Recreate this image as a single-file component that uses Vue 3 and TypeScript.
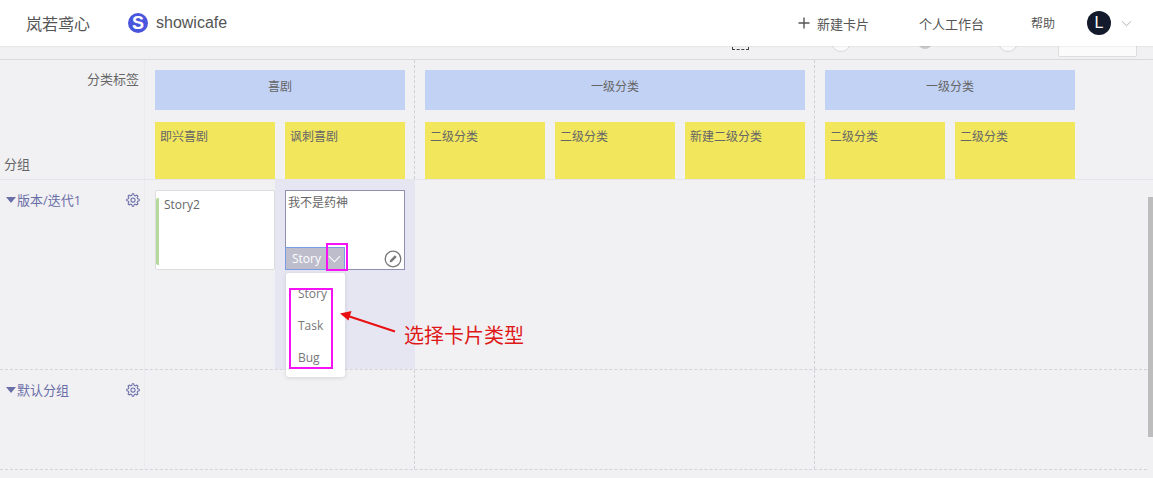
<template>
  <div class="page">
    <header class="topbar">
      <span class="brand">岚若鸢心</span>
      <span class="team-logo">S</span>
      <span class="team-name">showicafe</span>
      <nav class="nav">
        <span class="nav-new">
          <svg class="plus" viewBox="0 0 12 12" width="12" height="12">
            <path d="M6 0.5V11.5M0.5 6H11.5" />
          </svg>
          新建卡片
        </span>
        <span class="nav-work">个人工作台</span>
        <span class="nav-help">帮助</span>
        <span class="avatar">L</span>
        <svg class="nav-caret" viewBox="0 0 12 7" width="11" height="7">
          <path d="M1 1L6 6L11 1" />
        </svg>
      </nav>
    </header>

    <div class="toolbar">
      <span class="tool-dash"></span>
      <span class="tool-circle"></span>
      <span class="tool-dot"></span>
      <span class="tool-circle tool-circle-last"></span>
      <span class="tool-box"></span>
    </div>

    <div class="board">
      <div class="head-row">
        <div class="corner">
          <span class="corner-top">分类标签</span>
          <span class="corner-bottom">分组</span>
        </div>
        <section
          v-for="cat in categories"
          :key="cat.id"
          class="cat"
          :class="{ 'cat-first': cat.id === 'a', 'cat-second': cat.id === 'b', 'cat-third': cat.id === 'c' }"
        >
          <div class="cat-band">{{ cat.title }}</div>
          <div class="sub-list">
            <div v-for="sub in cat.subs" :key="sub.id" class="sub">{{ sub.title }}</div>
          </div>
        </section>
      </div>

      <div class="group-row group-tall">
        <div class="group-name">
          <span class="tri"></span>
          <span class="group-title">版本/迭代1</span>
          <svg class="gear" viewBox="0 0 24 24" width="14" height="14">
            <path :d="gearPath" />
            <circle cx="12" cy="12" r="3.6" />
          </svg>
        </div>
        <div class="lane cat-first lane-split">
          <div class="slot slot-left">
            <div class="card card-plain">
              <span class="card-bar"></span>
              <span class="card-title">Story2</span>
            </div>
          </div>
          <div class="slot slot-active">
            <div class="card card-edit">
              <span class="card-text">我不是药神</span>
              <div class="card-foot">
                <div class="type-select">
                  <span>Story</span>
                  <svg class="type-caret" viewBox="0 0 14 8" width="13" height="8">
                    <path d="M1 1L7 7L13 1" />
                  </svg>
                </div>
                <svg class="edit" viewBox="0 0 18 18" width="18" height="18">
                  <circle cx="9" cy="9" r="7.8" />
                  <path class="edit-pen" d="M5.6 12.4L6.3 9.9L10.9 5.3L12.7 7.1L8.1 11.7Z" />
                </svg>
              </div>
            </div>
          </div>
        </div>
        <div class="lane cat-second"></div>
        <div class="lane cat-third"></div>
      </div>

      <div class="group-row group-short">
        <div class="group-name">
          <span class="tri"></span>
          <span class="group-title">默认分组</span>
          <svg class="gear" viewBox="0 0 24 24" width="14" height="14">
            <path :d="gearPath" />
            <circle cx="12" cy="12" r="3.6" />
          </svg>
        </div>
        <div class="lane cat-first"></div>
        <div class="lane cat-second"></div>
        <div class="lane cat-third"></div>
      </div>
    </div>

    <ul class="type-menu">
      <li v-for="item in cardTypes" :key="item">{{ item }}</li>
    </ul>

    <span class="mark mark-caret"></span>
    <span class="mark mark-list"></span>
    <svg class="note-arrow" viewBox="0 0 60 24" width="60" height="24">
      <path class="note-line" d="M55 19.5L8 4" />
      <path class="note-head" d="M0 1.5L11.5 -1L8.5 8.5Z" />
    </svg>
    <span class="note">选择卡片类型</span>
    <span class="scroll-thumb"></span>
  </div>
</template>

<script setup lang="ts">
interface Sub {
  id: number;
  title: string;
}

interface Category {
  id: string;
  title: string;
  subs: Sub[];
}

const categories: Category[] = [
  {
    id: 'a',
    title: '喜剧',
    subs: [
      { id: 1, title: '即兴喜剧' },
      { id: 2, title: '讽刺喜剧' }
    ]
  },
  {
    id: 'b',
    title: '一级分类',
    subs: [
      { id: 3, title: '二级分类' },
      { id: 4, title: '二级分类' },
      { id: 5, title: '新建二级分类' }
    ]
  },
  {
    id: 'c',
    title: '一级分类',
    subs: [
      { id: 6, title: '二级分类' },
      { id: 7, title: '二级分类' }
    ]
  }
];

const cardTypes = ['Story', 'Task', 'Bug'];

// outline of the settings cog, eight teeth
const gearPath = (() => {
  const teeth = 8;
  const points: string[] = [];
  for (let i = 0; i < teeth; i++) {
    const a = (i / teeth) * Math.PI * 2 - Math.PI / 2;
    const step = Math.PI / teeth;
    const list: [number, number][] = [
      [8.2, a - step * 0.62],
      [10.8, a - step * 0.32],
      [10.8, a + step * 0.32],
      [8.2, a + step * 0.62]
    ];
    for (const [r, t] of list) {
      points.push(`${(12 + r * Math.cos(t)).toFixed(2)} ${(12 + r * Math.sin(t)).toFixed(2)}`);
    }
  }
  return `M${points.join('L')}Z`;
})();
</script>

<style scoped>
.page {
  position: relative;
  width: 1153px;
  height: 478px;
  overflow: hidden;
  background: #f1f1f4;
  color: #666;
  font-family: "Open Sans", "Noto Sans CJK SC", sans-serif;
  font-size: 12px;
}

.topbar {
  position: relative;
  z-index: 2;
  display: flex;
  align-items: center;
  height: 46px;
  box-sizing: border-box;
  padding-left: 26px;
  background: #fff;
  box-shadow: 0 1px 1px rgba(0, 0, 0, 0.04);
  color: #555;
}

.brand {
  font-size: 16px;
  margin-right: 38px;
}

.team-logo {
  display: flex;
  align-items: center;
  justify-content: center;
  width: 20px;
  height: 20px;
  border-radius: 50%;
  background: #4a55dd;
  color: #fff;
  font-family: "Liberation Sans", sans-serif;
  font-weight: 700;
  font-size: 18px;
  margin-right: 8px;
}

.team-name {
  font-family: "Liberation Sans", sans-serif;
  font-size: 16px;
}

.nav {
  display: flex;
  align-items: center;
  margin-left: auto;
  padding-right: 21px;
  font-size: 13px;
}

.nav-new {
  display: flex;
  align-items: center;
  gap: 7px;
}

.plus path {
  fill: none;
  stroke: #555;
  stroke-width: 1.4;
}

.nav-work {
  margin-left: 50px;
}

.nav-help {
  margin-left: 47px;
  font-size: 12px;
}

.avatar {
  display: flex;
  align-items: center;
  justify-content: center;
  width: 24px;
  height: 24px;
  margin-left: 32px;
  border-radius: 50%;
  background: #121a2c;
  color: #fff;
  font-family: "Liberation Sans", sans-serif;
  font-size: 16px;
}

.nav-caret {
  margin-left: 10px;
}

.nav-caret path {
  fill: none;
  stroke: #aaa;
}

.toolbar {
  display: flex;
  align-items: flex-start;
  height: 14px;
  box-sizing: border-box;
  border-bottom: 1px solid #d9d9dc;
  overflow: hidden;
  padding-left: 732px;
}

.tool-dash {
  width: 15px;
  height: 2px;
  margin-top: 1px;
  border: 1px dashed #444;
  border-top: none;
  flex: none;
}

.tool-circle {
  flex: none;
  width: 20px;
  height: 20px;
  margin-top: -14px;
  margin-left: 82px;
  border-radius: 50%;
  background: #fafafa;
  border: 1px solid #d8d8d8;
  box-sizing: border-box;
}

.tool-dot {
  flex: none;
  width: 14px;
  height: 14px;
  margin-top: -11px;
  margin-left: 67px;
  border-radius: 50%;
  background: #c8c8c8;
}

.tool-circle-last {
  margin-left: 66px;
}

.tool-box {
  flex: none;
  width: 79px;
  height: 11px;
  margin-left: 40px;
  box-sizing: border-box;
  background: #fbfbfb;
  border: 1px solid #ddd;
  border-top: none;
  border-radius: 0 0 2px 2px;
}

.head-row,
.group-row {
  display: grid;
  grid-template-columns: 145px 270px 400px 1fr;
}

.head-row {
  height: 120px;
  box-sizing: border-box;
  border-bottom: 1px solid #e6e6ea;
}

.corner {
  display: flex;
  flex-direction: column;
  justify-content: space-between;
  height: 119px;
  box-sizing: border-box;
  padding: 10px 5px 6px 4px;
  font-size: 13px;
  line-height: 18px;
  border-right: 1px dotted #e6e6ea;
}

.corner-top {
  text-align: right;
}

.cat {
  box-sizing: border-box;
  padding: 10px 0 0 10px;
}

.cat-first,
.cat-second {
  border-right: 1px dashed #cfcfd4;
}

.cat-band {
  height: 40px;
  line-height: 34px;
  text-align: center;
  background: #c2d2f4;
}

.cat-first .cat-band {
  width: 250px;
}

.cat-second .cat-band {
  width: 380px;
}

.cat-third .cat-band {
  width: 250px;
}

.sub-list {
  display: flex;
  gap: 10px;
  margin-top: 12px;
}

.sub {
  width: 120px;
  height: 57px;
  box-sizing: border-box;
  padding: 6px 5px;
  line-height: 18px;
  background: #f2e65c;
}

.group-row {
  box-sizing: border-box;
  border-bottom: 1px dashed #d4d4d8;
  width: 1147px;
}

.group-tall {
  height: 190px;
}

.group-short {
  height: 100px;
}

.group-name {
  display: flex;
  align-items: flex-start;
  box-sizing: border-box;
  padding: 10px 4px 0 6px;
  color: #6b6fa8;
  font-size: 13px;
  line-height: 20px;
  border-right: 1px dotted #e6e6ea;
}

.tri {
  width: 0;
  height: 0;
  margin: 7px 1px 0 0;
  border-left: 5px solid transparent;
  border-right: 5px solid transparent;
  border-top: 6px solid #6b6fa8;
}

.gear {
  margin: 3px 0 0 auto;
}

.gear path,
.gear circle {
  fill: none;
  stroke: #6b6fa8;
  stroke-width: 1.8;
  stroke-linejoin: round;
}

.lane {
  box-sizing: border-box;
}

.lane-split {
  display: flex;
}

.slot {
  box-sizing: border-box;
  padding: 10px 10px 0;
}

.slot-left {
  width: 130px;
  padding-right: 0;
}

.slot-active {
  flex: 1;
  background: #e6e6f3;
}

.card {
  position: relative;
  width: 120px;
  height: 80px;
  box-sizing: border-box;
  background: #fff;
}

.card-plain {
  display: flex;
  align-items: flex-start;
  padding-top: 6px;
  border: 1px solid #dcdcdc;
  border-radius: 2px;
  line-height: 16px;
}

.card-bar {
  width: 3px;
  height: 67px;
  margin-top: 1px;
  background: #b5d99c;
  border-radius: 2px 0 0 2px;
  flex: none;
}

.card-title {
  margin-left: 5px;
}

.card-edit {
  display: flex;
  flex-direction: column;
  justify-content: space-between;
  border: 1px solid #8f8fb0;
  padding-top: 4px;
  line-height: 16px;
}

.card-text {
  padding-left: 2px;
}

.card-foot {
  display: flex;
  align-items: flex-end;
  justify-content: space-between;
  margin: 0 2px -1px -1px;
}

.type-select {
  display: flex;
  align-items: center;
  justify-content: space-between;
  width: 60px;
  height: 23px;
  box-sizing: border-box;
  padding: 0 3px 0 6px;
  background: #bdbdcc;
  border: 1px solid #7a9de2;
  color: #fff;
}

.type-caret path {
  fill: none;
  stroke: #fff;
  stroke-width: 1.1;
}

.edit {
  margin-bottom: 2px;
}

.edit circle {
  fill: #fff;
  stroke: #777;
  stroke-width: 1.3;
}

.edit-pen {
  fill: #777;
}

.type-menu {
  position: absolute;
  left: 286px;
  top: 273px;
  width: 59px;
  height: 104px;
  margin: 0;
  padding: 5px 0 0 12px;
  box-sizing: border-box;
  list-style: none;
  background: #fff;
  border-radius: 3px;
  box-shadow: 0 1px 4px rgba(0, 0, 0, 0.12);
  color: #777;
}

.type-menu li {
  height: 32px;
  line-height: 32px;
}

.mark {
  position: absolute;
  box-sizing: border-box;
  border: 2px solid #f512f5;
}

.mark-caret {
  left: 326px;
  top: 243px;
  width: 22px;
  height: 28px;
}

.mark-list {
  left: 289px;
  top: 288px;
  width: 44px;
  height: 81px;
}

.note-arrow {
  position: absolute;
  left: 340px;
  top: 312px;
  overflow: visible;
}

.note-line {
  fill: none;
  stroke: #e81010;
  stroke-width: 2;
}

.note-head {
  fill: #e81010;
}

.note {
  position: absolute;
  left: 404px;
  top: 322px;
  font-size: 20px;
  line-height: 28px;
  color: #e01818;
}

.scroll-thumb {
  position: absolute;
  left: 1148px;
  top: 197px;
  width: 5px;
  height: 240px;
  background: #bdbdbd;
}
</style>

<style>
html,
body {
  margin: 0;
  overflow: hidden;
}
</style>
